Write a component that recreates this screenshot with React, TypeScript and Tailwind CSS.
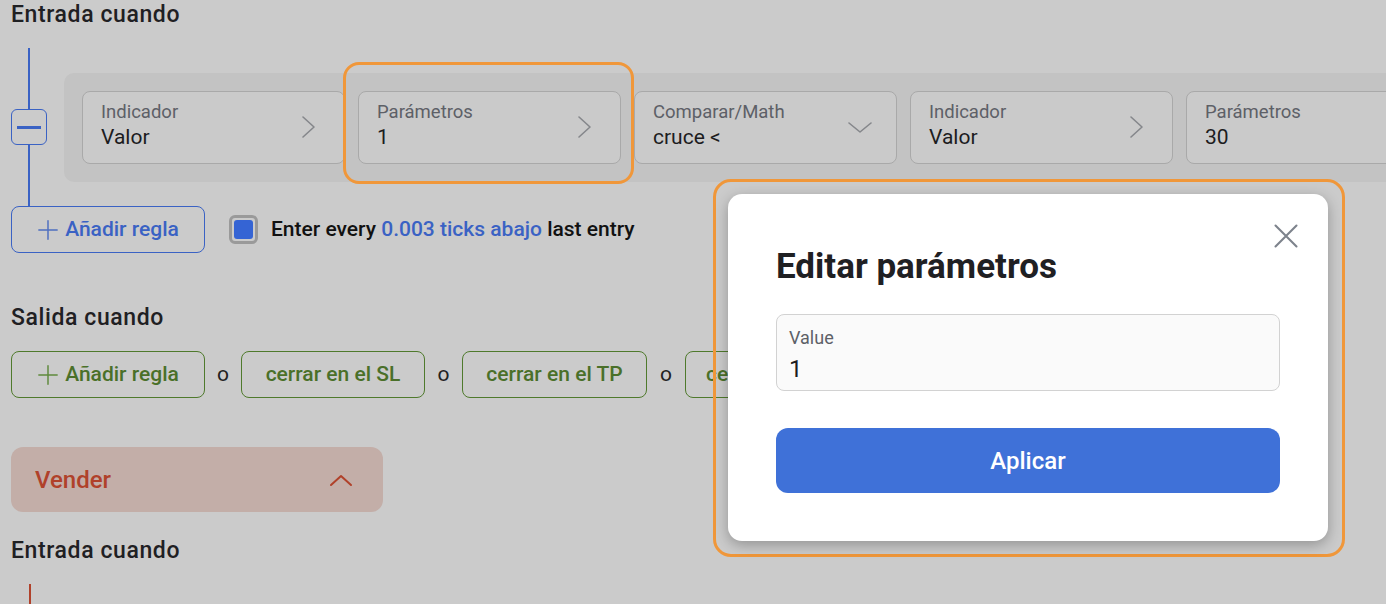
import React from 'react';

const font = { fontFamily: 'Roboto, "Noto Sans", sans-serif' };

const ChevronRight = () => (
  <svg className="h-[24px] w-[24px] text-[#85878b]" viewBox="0 0 24 24" fill="none" stroke="currentColor" strokeWidth={1.6} strokeLinecap="round" strokeLinejoin="round">
    <path d="M7 2l11 10-11 10" />
  </svg>
);

const ChevronDown = () => (
  <svg className="h-[24px] w-[24px] text-[#85878b]" viewBox="0 0 24 24" fill="none" stroke="currentColor" strokeWidth={1.6} strokeLinecap="round" strokeLinejoin="round">
    <path d="M1 8l11 9 11-9" />
  </svg>
);

const Plus = ({ className }: { className: string }) => (
  <svg className={className} viewBox="0 0 24 24" fill="none" stroke="currentColor" strokeWidth={1.6} strokeLinecap="round">
    <path d="M12 2v20M2 12h20" />
  </svg>
);

interface CardProps {
  label: string;
  value: string;
  icon?: 'right' | 'down' | 'none';
}

const Card: React.FC<CardProps> = ({ label, value, icon = 'right' }) => (
  <div className="w-[263px] h-[73px] shrink-0 rounded-[8px] border border-[#a9a9a9] bg-[#cacaca] flex items-center pl-[18px] pr-[24px]">
    <div className="flex-1 min-w-0">
      <p className="text-[18.5px] leading-[22px] text-[#5d6067] -mt-[2px]">{label}</p>
      <p className="text-[21px] leading-[28px] text-[#1c1c1e]">{value}</p>
    </div>
    {icon === 'right' && <ChevronRight />}
    {icon === 'down' && <ChevronDown />}
  </div>
);

const GreenButton: React.FC<{ children: React.ReactNode; className: string }> = ({ children, className }) => (
  <button className={`h-[47px] shrink-0 rounded-[8px] border border-[#4f7a2c] text-[#4a7029] text-[21px] font-medium flex items-center gap-[6px] ${className}`}>
    {children}
  </button>
);

export default function App() {
  return (
    <div className="relative h-[604px] w-[1386px] overflow-hidden bg-[#cbcbcb] pl-[11px]" style={font}>
      <h2 className="text-[23px] leading-[30px] font-medium text-[#1f2023] tracking-[0.6px]">Entrada cuando</h2>

      {/* rule block */}
      <div className="mt-[18px] flex h-[158px] items-center">
        <div className="flex h-full w-[36px] shrink-0 flex-col items-center">
          <div className="w-[2px] flex-1 bg-[#3a62c4]" />
          <button className="flex h-[36px] w-[36px] items-center justify-center rounded-[6px] border border-[#3a62c4]">
            <span className="block h-[3px] w-[24px] bg-[#3a62c4]" />
          </button>
          <div className="w-[2px] flex-1 bg-[#3a62c4]" />
        </div>
        <div className="ml-[17px] flex h-[109px] shrink-0 items-center gap-[13px] rounded-[10px] bg-[#c3c3c3] px-[18px]">
          <Card label="Indicador" value="Valor" />
          <Card label="Parámetros" value="1" />
          <Card label="Comparar/Math" value="cruce <" icon="down" />
          <Card label="Indicador" value="Valor" />
          <Card label="Parámetros" value="30" icon="none" />
        </div>
      </div>

      <div className="flex items-center">
        <button className="flex h-[47px] w-[194px] items-center justify-center gap-[6px] rounded-[8px] border border-[#3a62c4] text-[21px] font-medium text-[#3a62c4]">
          <Plus className="h-[22px] w-[22px] text-[#4e6fc0]" />
          Añadir regla
        </button>
        <div className="ml-[24px] flex h-[29px] w-[29px] items-center justify-center rounded-[6px] border-[3px] border-[#9a9a9a]">
          <span className="block h-[19px] w-[19px] rounded-[3px] bg-[#3564d4]" />
        </div>
        <p className="ml-[13px] text-[21px] font-medium text-[#111111]">
          Enter every <span className="text-[#3a62c4]">0.003 ticks abajo</span> last entry
        </p>
      </div>

      <h2 className="mt-[50px] text-[23px] leading-[30px] font-medium text-[#1f2023] tracking-[0.6px]">Salida cuando</h2>
      <div className="mt-[18px] flex items-center">
        <GreenButton className="w-[194px] justify-center">
          <Plus className="h-[22px] w-[22px] text-[#5f8a3c]" />
          Añadir regla
        </GreenButton>
        <span className="w-[36px] text-center text-[21px] text-[#222]">o</span>
        <GreenButton className="w-[184px] justify-center">cerrar en el SL</GreenButton>
        <span className="w-[37px] text-center text-[21px] text-[#222]">o</span>
        <GreenButton className="w-[185px] justify-center">cerrar en el TP</GreenButton>
        <span className="w-[38px] text-center text-[21px] text-[#222]">o</span>
        <GreenButton className="w-[190px] px-[20px]">cerrar</GreenButton>
      </div>

      <div className="mt-[49px] flex h-[65px] w-[372px] items-center justify-between rounded-[12px] bg-[#c3aea8] pl-[24px] pr-[30px]">
        <span className="text-[24px] font-medium text-[#b0412a]">Vender</span>
        <svg className="h-[24px] w-[24px] text-[#b0412a]" viewBox="0 0 24 24" fill="none" stroke="currentColor" strokeWidth={2} strokeLinecap="round" strokeLinejoin="round">
          <path d="M2 17l10-9 10 9" />
        </svg>
      </div>

      <h2 className="mt-[24px] text-[23px] leading-[30px] font-medium text-[#1f2023] tracking-[0.6px]">Entrada cuando</h2>
      <div className="ml-[18px] mt-[18px] h-[40px] w-[2px] bg-[#b0412a]" />

      {/* highlight around Parámetros card */}
      <div className="pointer-events-none absolute left-[343px] top-[62px] h-[122px] w-[291px] rounded-[16px] border-[3px] border-[#f0973a]" />

      {/* modal highlight */}
      <div className="pointer-events-none absolute left-[713px] top-[179px] h-[378px] w-[632px] rounded-[18px] border-[3px] border-[#f0973a]" />

      {/* modal */}
      <div className="absolute left-[728px] top-[194px] h-[347px] w-[600px] rounded-[14px] bg-white px-[48px] pt-[50px] shadow-[0_4px_14px_rgba(0,0,0,0.28)]">
        <button className="absolute right-[28px] top-[28px] text-[#7d838c]">
          <svg className="h-[28px] w-[28px]" viewBox="0 0 24 24" fill="none" stroke="currentColor" strokeWidth={1.8} strokeLinecap="round">
            <path d="M3 3l18 18M21 3L3 21" />
          </svg>
        </button>
        <h3 className="text-[35px] leading-[46px] font-bold text-[#1f2023]">Editar parámetros</h3>
        <div className="mt-[24px] h-[77px] w-[504px] rounded-[8px] border border-[#d2d2d2] bg-[#fafafa] px-[12px] pt-[12px]">
          <p className="text-[18px] leading-[22px] text-[#5d6067]">Value</p>
          <p className="mt-[6px] text-[24px] leading-[28px] text-[#1c1c1e]">1</p>
        </div>
        <button className="mt-[37px] flex h-[65px] w-[504px] items-center justify-center rounded-[12px] bg-[#3f71d8] text-[24px] font-medium text-white">
          Aplicar
        </button>
      </div>
    </div>
  );
}
